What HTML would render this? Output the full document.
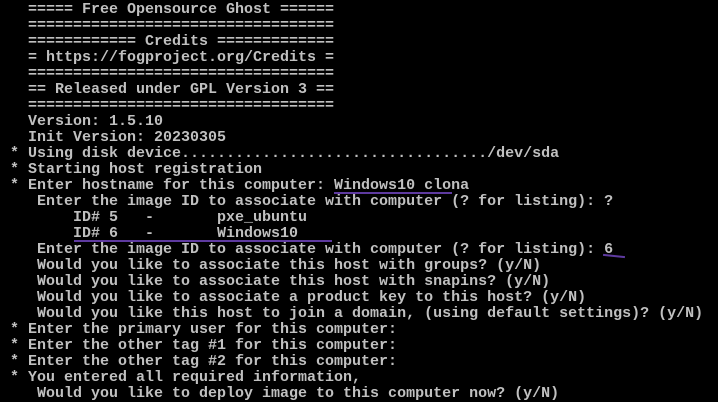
<!DOCTYPE html>
<html><head><meta charset="utf-8"><style>
html,body{margin:0;padding:0;background:#000;}
body{width:718px;height:401px;overflow:hidden;position:relative;}
pre{margin:0;position:absolute;left:10px;top:2px;font-family:"Liberation Mono",monospace;font-size:15px;line-height:16px;color:#c0c0c0;font-weight:bold;letter-spacing:0;}
.u{position:absolute;height:2px;background:#5e3aa0;}
</style></head><body>
<pre>  ===== Free Opensource Ghost ======
  ==================================
  ============ Credits =============
  = https://fogproject.org/Credits =
  ==================================
  == Released under GPL Version 3 ==
  ==================================
  Version: 1.5.10
  Init Version: 20230305
* Using disk device................................../dev/sda
* Starting host registration
* Enter hostname for this computer: Windows10 clona
   Enter the image ID to associate with computer (? for listing): ?
       ID# 5   -       pxe_ubuntu
       ID# 6   -       Windows10
   Enter the image ID to associate with computer (? for listing): 6
   Would you like to associate this host with groups? (y/N)
   Would you like to associate this host with snapins? (y/N)
   Would you like to associate a product key to this host? (y/N)
   Would you like this host to join a domain, (using default settings)? (y/N)
* Enter the primary user for this computer:
* Enter the other tag #1 for this computer:
* Enter the other tag #2 for this computer:
* You entered all required information,
   Would you like to deploy image to this computer now? (y/N)</pre>
<div class="u" style="left:334px;top:192px;width:118px;"></div>
<div class="u" style="left:74px;top:240px;width:258px;"></div>
<div class="u" style="left:603px;top:255px;width:22px;transform:rotate(6deg);"></div>
</body></html>
